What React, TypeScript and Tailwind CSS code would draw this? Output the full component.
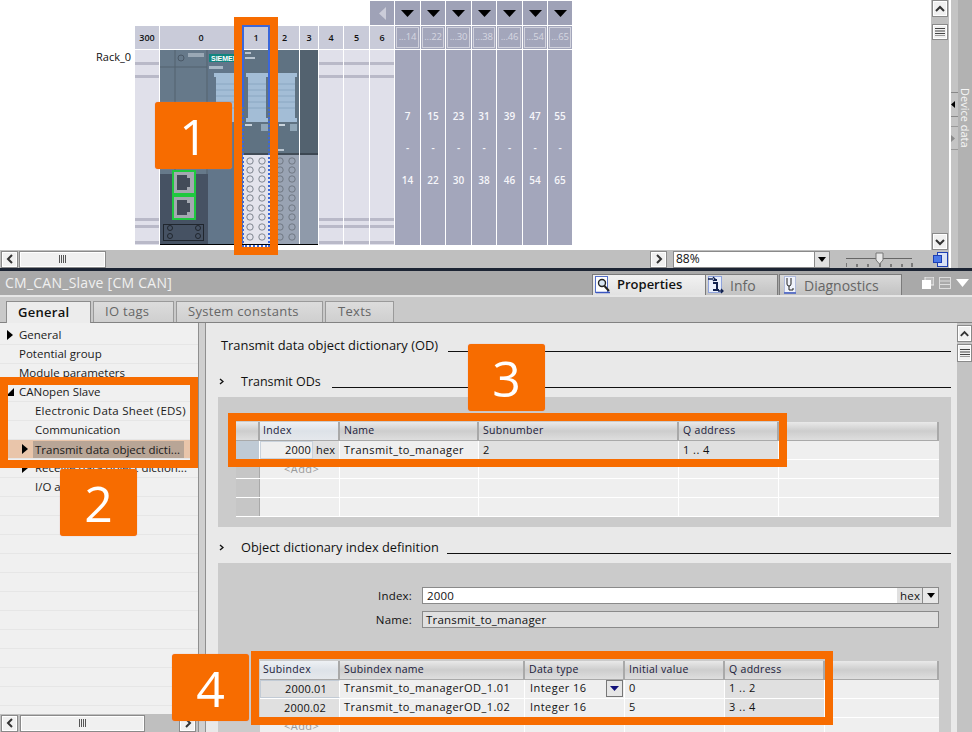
import React from "react";

const Tri = () => (
  <svg width="13" height="7" viewBox="0 0 13 7"><polygon points="0,0 13,0 6.5,7" fill="#000" /></svg>
);

const UpDown = ({ dir }: { dir: "up" | "down" | "left" | "right" }) => {
  const d = { up: "M3 9 L7 5 L11 9", down: "M3 5 L7 9 L11 5", left: "M9 3 L5 7 L9 11", right: "M5 3 L9 7 L5 11" }[dir];
  return (
    <svg width="14" height="14" viewBox="0 0 14 14"><path d={d} fill="none" stroke="#333" strokeWidth="2" /></svg>
  );
};

const SBtn = ({ className, children }: { className: string; children?: React.ReactNode }) => (
  <div className={"flex items-center justify-center bg-[#f0f0f0] border border-[#8a8a8a] shadow-[inset_0_0_0_1px_#fff] " + className}>{children}</div>
);

const Grip = () => (
  <svg width="10" height="8" viewBox="0 0 10 8"><path d="M0 .5H10M0 3H10M0 5.5H10M0 8H10" stroke="#444" strokeWidth="1" /></svg>
);
const GripV = () => (
  <svg width="8" height="8" viewBox="0 0 8 8"><path d="M.5 0V8M2.5 0V8M4.5 0V8M6.5 0V8" stroke="#555" strokeWidth="1" /></svg>
);

const Bars = () => (
  <>
    <div className="h-[12px]" />
    <div className="h-[3px] bg-[#b9b9c8]" />
    <div className="h-[10px]" />
    <div className="h-[3px] bg-[#b9b9c8]" />
    <div className="h-[140px]" />
    <div className="h-[3px] bg-[#b9b9c8]" />
    <div className="h-[4px]" />
    <div className="h-[3px] bg-[#b9b9c8]" />
    <div className="h-[13px]" />
    <div className="h-[3px] bg-[#b9b9c8]" />
  </>
);

const EmptySlot = ({ w }: { w: string }) => <div className={"h-[195px] bg-[#e0e0ea] " + w}><Bars /></div>;

const AddrCol = ({ w, a, b }: { w: string; a: string; b: string }) => (
  <div className={"h-[195px] bg-[#a3a6bb] flex flex-col items-center pt-[59px] gap-[18px] text-[10px] font-semibold leading-[14px] text-[#f6f6fa] " + w}>
    <div>{a}</div>
    <div>-</div>
    <div>{b}</div>
  </div>
);

const Head = ({ w, t }: { w: string; t: string }) => (
  <div className={"h-[23px] bg-[#c9cbd9] flex items-center justify-center text-[9px] font-semibold text-[#111] " + w}>{t}</div>
);

const AddrHead = ({ w, t }: { w: string; t: string }) => (
  <div className={"h-[23px] bg-[#a3a6bb] p-px " + w}>
    <div className="h-full border border-[#d0d1dc] flex items-center justify-center text-[9.5px] tracking-[-0.2px] font-medium text-[#d6d7e1] overflow-hidden whitespace-nowrap">{t}</div>
  </div>
);

const TopCell = ({ w }: { w: string }) => (
  <div className={"h-[24px] bg-[#9fa2b7] flex items-center justify-center " + w}><Tri /></div>
);

const circles = [161, 170, 179, 189, 198, 208, 217, 227, 237];

const Modules = () => (
  <svg width="158" height="195" viewBox="160 50 158 195" className="block">
    <rect x="160" y="50" width="48" height="195" fill="#66798a" />
    <path d="M175 50V174M207 50V245M160 67H207" stroke="#53626f" strokeWidth="1" />
    <circle cx="181" cy="58" r="3" fill="none" stroke="#4a5866" />
    <rect x="188" y="53" width="16" height="4" fill="#9aa8b5" />
    <rect x="160" y="174" width="48" height="71" fill="#465263" />
    <rect x="208" y="50" width="35" height="195" fill="#62768a" />
    <rect x="209" y="54" width="26" height="8" fill="#12857f" />
    <text x="211" y="61" fontSize="7" fontWeight="700" fill="#fff" fontFamily="Liberation Sans">SIEMENS</text>
    <rect x="209" y="66" width="14" height="3" fill="#a9b8c6" />
    <path d="M214 73H238V77H236V118H238V122H214V118H216V77H214Z" fill="#a3bdd6" />
    <path d="M216 84H236M216 90H236M216 96H236M216 102H236M216 108H236" stroke="#8aa7c2" />
    <rect x="243" y="50" width="27" height="104" fill="#5f7282" />
    <rect x="243" y="153" width="27" height="2" fill="#414c57" />
    <rect x="243" y="155" width="27" height="90" fill="#e3e3ec" />
    <rect x="245" y="52" width="6" height="2" fill="#b9c5d0" /><rect x="245" y="57" width="10" height="2" fill="#b9c5d0" />
    <path d="M246 73H268V77H266V118H268V122H246V118H248V77H246Z" fill="#a3bdd6" />
    <path d="M248 84H266M248 90H266M248 96H266M248 102H266M248 108H266" stroke="#8aa7c2" />
    <rect x="245" y="124" width="7" height="2" fill="#c9d3dc" /><rect x="261" y="124" width="7" height="7" fill="#90a6b7" />
    <rect x="270" y="50" width="29" height="104" fill="#5f7282" />
    <rect x="270" y="153" width="29" height="2" fill="#414c57" />
    <rect x="270" y="155" width="29" height="90" fill="#99a3b3" />
    <path d="M272 73H297V77H295V118H297V122H272V118H274V77H272Z" fill="#a3bdd6" />
    <path d="M274 84H295M274 90H295M274 96H295M274 102H295M274 108H295" stroke="#8aa7c2" />
    <rect x="290" y="124" width="7" height="7" fill="#90a6b7" />
    <rect x="279" y="124" width="6" height="2" fill="#c9d3dc" /><rect x="278" y="149" width="6" height="2" fill="#b9c5d0" />
    <rect x="300" y="50" width="18" height="103" fill="#53626f" />
    <rect x="300" y="153" width="18" height="2" fill="#3c4752" />
    <rect x="300" y="155" width="18" height="90" fill="#8f9aaa" />
    <rect x="299" y="50" width="1" height="195" fill="#fff" />
    {circles.map((y) => (
      <g key={y} fill="none" stroke="#666d77" strokeWidth="0.8">
        <circle cx="250" cy={y} r="3.2" /><circle cx="262" cy={y} r="3.2" />
        <circle cx="280" cy={y} r="3.2" /><circle cx="292" cy={y} r="3.2" />
      </g>
    ))}
    {[170, 195].map((y) => (
      <g key={y}>
        <rect x="173" y={y + 1} width="22" height="23" fill="#a4a8b0" stroke="#1fc83f" strokeWidth="2" />
        <path d={`M177 ${y + 5}H187V${y + 8}H190V${y + 17}H187V${y + 20}H177Z`} fill="#434b58" />
      </g>
    ))}
    <rect x="163.5" y="224.5" width="40" height="16" fill="none" stroke="#20262e" />
    {[[170, 228], [198, 228], [170, 236], [198, 236]].map(([x, y]) => (
      <circle key={x + "-" + y} cx={x} cy={y} r="2.5" fill="none" stroke="#20262e" />
    ))}
    <rect x="160" y="244" width="158" height="1" fill="#000" />
  </svg>
);

const TopArea = () => (
  <div className="flex h-[268px] bg-white">
    <div className="w-[931px] flex flex-col">
      <div className="h-[250px] pl-[135px] pt-px">
        <div className="flex gap-px pl-[235px]">
          <div className="h-[24px] w-[24px] bg-[#9fa2b7] flex items-center justify-center">
            <svg width="7" height="13" viewBox="0 0 7 13"><polygon points="7,0 7,13 0,6.5" fill="#cbccd9" /></svg>
          </div>
          <TopCell w="w-[25px]" /><TopCell w="w-[24px]" /><TopCell w="w-[25px]" /><TopCell w="w-[24px]" />
          <TopCell w="w-[25px]" /><TopCell w="w-[24px]" /><TopCell w="w-[24px]" />
        </div>
        <div className="flex gap-px mt-px">
          <Head w="w-[24px]" t="300" /><Head w="w-[82px]" t="0" /><Head w="w-[26px]" t="1" /><Head w="w-[29px]" t="2" />
          <Head w="w-[18px]" t="3" /><Head w="w-[24px]" t="4" /><Head w="w-[25px]" t="5" /><Head w="w-[24px]" t="6" />
          <AddrHead w="w-[25px]" t="...14" /><AddrHead w="w-[24px]" t="...22" /><AddrHead w="w-[25px]" t="...30" />
          <AddrHead w="w-[24px]" t="...38" /><AddrHead w="w-[25px]" t="...46" /><AddrHead w="w-[24px]" t="...54" /><AddrHead w="w-[24px]" t="...65" />
        </div>
        <div className="flex gap-px mt-px">
          <EmptySlot w="w-[24px]" />
          <Modules />
          <EmptySlot w="w-[24px]" /><EmptySlot w="w-[25px]" /><EmptySlot w="w-[24px]" />
          <AddrCol w="w-[25px]" a="7" b="14" /><AddrCol w="w-[24px]" a="15" b="22" /><AddrCol w="w-[25px]" a="23" b="30" />
          <AddrCol w="w-[24px]" a="31" b="38" /><AddrCol w="w-[25px]" a="39" b="46" /><AddrCol w="w-[24px]" a="47" b="54" /><AddrCol w="w-[24px]" a="55" b="65" />
        </div>
      </div>
      <div className="h-[18px] bg-[#bfbfbf] flex items-center">
        <SBtn className="w-[17px] h-[17px] ml-[1px]"><UpDown dir="left" /></SBtn>
        <SBtn className="w-[87px] h-[17px] ml-[1px]"><GripV /></SBtn>
        <SBtn className="w-[17px] h-[17px] ml-[544px]"><UpDown dir="right" /></SBtn>
        <div className="ml-[6px] w-[157px] h-[17px] bg-white border border-[#8a8a8a] flex items-center justify-between text-[12px] leading-none text-[#111]">
          <span className="pl-[2px]">88%</span>
          <div className="w-[15px] h-full bg-[#e0e0e0] border-l border-[#8a8a8a] flex items-center justify-center">
            <svg width="8" height="5" viewBox="0 0 8 5"><polygon points="0,0 8,0 4,5" fill="#000" /></svg>
          </div>
        </div>
        <svg width="68" height="16" viewBox="0 0 68 16" className="ml-[16px]">
          <path d="M0 7.5H66" stroke="#666" />
          <path d="M0 12V16M11 13V16M22 13V16M34 12V16M45 13V16M56 13V16M66 12V16" stroke="#333" />
          <path d="M30 2H37V9L33.5 13L30 9Z" fill="#e8e8e8" stroke="#777" />
        </svg>
      </div>
    </div>
    <div className="w-[18px] flex flex-col bg-[#bfbfbf]">
      <div className="h-[250px] flex flex-col justify-between">
        <div className="flex flex-col gap-[7px]">
          <SBtn className="h-[17px] mx-px"><UpDown dir="up" /></SBtn>
          <SBtn className="h-[16px] mx-px"><Grip /></SBtn>
        </div>
        <SBtn className="h-[17px] mx-px"><UpDown dir="down" /></SBtn>
      </div>
      <div className="h-[18px] flex items-center justify-center bg-[#bfbfbf]">
        <svg width="15" height="15" viewBox="0 0 15 15">
          <rect x="4.5" y="0.5" width="10" height="14" fill="#d9e2f5" stroke="#1d3fb3" />
          <rect x="0.5" y="3.5" width="8" height="7" fill="#4a78e8" stroke="#1d3fb3" />
        </svg>
      </div>
    </div>
    <div className="w-[23px] flex bg-[#ececec]">
      <div className="w-[2px] bg-white" />
      <div className="w-[7px] bg-[#c4c4c4] flex flex-col pt-[92px]">
        <div className="h-[25px] border-y border-[#888] flex items-center">
          <svg width="4" height="7" viewBox="0 0 4 7"><polygon points="4,0 4,7 0,3.5" fill="#000" /></svg>
        </div>
        <div className="h-[24px] mt-[9px] border-y border-[#999] flex items-center">
          <svg width="4" height="7" viewBox="0 0 4 7"><polygon points="0,0 0,7 4,3.5" fill="#8a8a8a" /></svg>
        </div>
      </div>
      <div className="w-[14px] bg-[#b2b2b2] pt-[88px] flex justify-center">
        <div className="[writing-mode:vertical-rl] text-[11px] leading-[14px] text-[#f6f6f6]">Device data</div>
      </div>
    </div>
  </div>
);

const PropsIcon = () => (
  <svg width="16" height="18" viewBox="0 0 16 18">
    <rect x="0.5" y="0.5" width="12" height="16" fill="#fff" stroke="#5570c8" />
    <circle cx="7" cy="7" r="3.5" fill="#d8e6f4" stroke="#222" strokeWidth="1.4" />
    <path d="M9.5 10L14 15" stroke="#222" strokeWidth="2" />
    <path d="M1 16.5H15" stroke="#3a56c0" strokeWidth="1.5" />
  </svg>
);
const InfoIcon = () => (
  <svg width="16" height="18" viewBox="0 0 16 18">
    <rect x="0.5" y="0.5" width="13" height="16" fill="#e8eefb" stroke="#8fa3dc" />
    <path d="M0 3H5M5 1L7 3L5 5" stroke="#10204f" strokeWidth="1.3" fill="none" />
    <rect x="6" y="3" width="3" height="2" fill="#10204f" />
    <path d="M5 7H9V14H11M5 14H9" stroke="#10204f" strokeWidth="2" fill="none" />
    <path d="M10 15H15M13 13L15 15L13 17" stroke="#10204f" strokeWidth="1.3" fill="none" />
  </svg>
);
const DiagIcon = () => (
  <svg width="13" height="18" viewBox="0 0 13 18">
    <rect x="0.5" y="0.5" width="11" height="16" fill="#f0f3fb" stroke="#b0bbdc" />
    <path d="M3 2V8Q3 10 5 10Q7 10 7 8V2M5 10V14H9V12" stroke="#222" fill="none" />
    <path d="M0 17H12" stroke="#3a56c0" strokeWidth="1.4" />
  </svg>
);

const PropHeader = () => (
  <>
    <div className="h-[3px] bg-[#1c2433]" />
    <div className="h-[24px] bg-[#a9a9a9] flex items-end">
      <div className="w-[592px] self-center pl-[5px] text-[14px] font-medium leading-[20px] text-[#f0f0f0] tracking-[0.25px]">CM_CAN_Slave [CM CAN]</div>
      <div className="w-[113px] h-[21px] bg-gradient-to-b from-[#f2f2f2] to-[#e2e2e2] border-l border-t border-[#7b7b7b] flex items-center gap-[6px] pl-[2px] text-[13px] font-semibold text-[#111]">
        <PropsIcon /><span>Properties</span>
      </div>
      <div className="w-[73px] h-[21px] bg-gradient-to-b from-[#d9d9d9] to-[#c3c3c3] border-x border-t border-[#7b7b7b] flex items-center gap-[6px] pl-[2px] text-[14px] font-medium text-[#666]">
        <InfoIcon /><span>Info</span>
      </div>
      <div className="ml-[1px] w-[123px] h-[21px] bg-gradient-to-b from-[#d9d9d9] to-[#c3c3c3] border-x border-t border-[#7b7b7b] flex items-center gap-[7px] pl-[4px] text-[14px] font-medium text-[#666]">
        <DiagIcon /><span>Diagnostics</span>
      </div>
      <div className="flex items-center gap-[5px] ml-[20px] self-center">
        <svg width="12" height="12" viewBox="0 0 12 12"><rect x="3" y="0" width="9" height="8" fill="#bbb" stroke="#eee" /><rect x="0" y="3" width="9" height="9" fill="#fff" /></svg>
        <svg width="12" height="12" viewBox="0 0 12 12"><rect x="0.5" y="0.5" width="11" height="11" fill="none" stroke="#ddd" /><path d="M0 4H12M0 7.5H12" stroke="#ddd" /></svg>
        <svg width="13" height="8" viewBox="0 0 13 8"><polygon points="0,0 13,0 6.5,8" fill="#fff" /></svg>
      </div>
    </div>
    <div className="h-[2px] bg-[#e6e6e6]" />
    <div className="h-[26px] bg-[#c9c9c9] border-b border-[#828282] flex items-end pl-[6px] gap-[2px] text-[13px] tracking-[0.3px]">
      <div className="relative top-px w-[85px] h-[22px] bg-[#ececec] border-x border-t border-[#8c8c8c] flex items-center pl-[11px] font-semibold text-[#111]">General</div>
      <div className="w-[81px] h-[21px] bg-gradient-to-b from-[#dcdcdc] to-[#cfcfcf] border-x border-t border-[#9a9a9a] flex items-center pl-[11px] font-medium text-[#666]">IO tags</div>
      <div className="w-[147px] h-[21px] bg-gradient-to-b from-[#dcdcdc] to-[#cfcfcf] border-x border-t border-[#9a9a9a] flex items-center pl-[11px] font-medium text-[#666]">System constants</div>
      <div className="w-[69px] h-[21px] bg-gradient-to-b from-[#dcdcdc] to-[#cfcfcf] border-x border-t border-[#9a9a9a] flex items-center pl-[12px] font-medium text-[#666]">Texts</div>
    </div>
  </>
);

const NavRow = ({ t, arrow, indent, sel, wide }: { t?: string; arrow?: "right" | "down"; indent?: boolean; sel?: boolean; wide?: boolean }) => (
  <div className={"h-[19px] border-b border-[#e6e6e6] flex items-center text-[11.5px] text-[#1a1a1a] whitespace-nowrap " + (sel ? "bg-[#e9c5aa] " : "") + (wide ? "tracking-[0.22px]" : "")}>
    <div className={"flex items-center justify-center w-[10px] shrink-0 " + (indent ? "ml-[20px] mr-[5px]" : "ml-[5px] mr-[4px]")}>
      {arrow === "right" && <svg width="6" height="10" viewBox="0 0 6 10"><polygon points="0,0 6,5 0,10" fill="#000" /></svg>}
      {arrow === "down" && <svg width="8" height="8" viewBox="0 0 8 8"><polygon points="8,0 8,8 0,8" fill="#000" /></svg>}
    </div>
    {t && <div className={sel ? "bg-[#b8a596] h-[17px] w-[151px] leading-[17px] -ml-[2px] pl-[2px]" : ""}>{t}</div>}
  </div>
);

const NavPanel = () => (
  <div className="w-[198px] bg-[#f0f0f0] flex flex-col justify-between">
    <div className="pt-[3px]">
      <NavRow t="General" arrow="right" />
      <NavRow t="Potential group" />
      <NavRow t="Module parameters" />
      <NavRow t="CANopen Slave" arrow="down" />
      <NavRow t="Electronic Data Sheet (EDS)" indent wide />
      <NavRow t="Communication" indent />
      <NavRow t="Transmit data object dicti..." indent arrow="right" sel />
      <NavRow t="Receive data object diction..." indent arrow="right" />
      <NavRow t="I/O addresses" indent />
      {Array.from({ length: 11 }).map((_, i) => <NavRow key={i} />)}
    </div>
    <div className="h-[18px] bg-[#bfbfbf] flex items-center">
      <SBtn className="w-[17px] h-[17px] ml-[1px]"><UpDown dir="left" /></SBtn>
      <SBtn className="w-[125px] h-[17px] ml-[2px]"><GripV /></SBtn>
      <SBtn className="w-[17px] h-[17px] ml-[34px]"><UpDown dir="right" /></SBtn>
    </div>
  </div>
);

const SectionTitle = ({ t, chevron, line, size }: { t: string; chevron?: boolean; line: string; size: string }) => (
  <div className={"flex h-[20px] items-center text-[#111] whitespace-nowrap " + size}>
    {chevron ? (
      <>
        <svg width="5" height="7" viewBox="0 0 5 7" className="ml-[1px] mr-[17px]"><path d="M1 1L4 3.5L1 6" fill="none" stroke="#111" strokeWidth="1.4" /></svg>
        <span className="pt-[2px]">{t}</span>
      </>
    ) : (
      <span className="ml-[3px] pt-[2px]">{t}</span>
    )}
    <div className={"ml-auto h-px bg-[#111] mt-[12px] " + line} />
  </div>
);

const hCell = "h-[18px] flex items-center pl-[4px] border-r-2 border-[#a9a9a9] bg-gradient-to-b from-[#e9e9e9] via-[#cdcdcd] to-[#dedede] text-[10.5px] text-[#1a1a3a] whitespace-nowrap tracking-[0.3px]";
const hFirst = "h-[18px] flex items-center pl-[3px] border-r-2 border-[#a9a9a9] bg-gradient-to-b from-[#eef1f5] via-[#dde2e8] to-[#e5e8ec] text-[10.5px] text-[#1a1a3a] whitespace-nowrap tracking-[0.3px]";
const lt = "h-[18px] flex items-center pl-[4px] border-r border-white bg-[#efefef] text-[11px] text-[#111] whitespace-nowrap tracking-[0.45px]";
const dk = "h-[18px] flex items-center pl-[4px] border-r border-white bg-[#e0e0e0] text-[11px] text-[#111] whitespace-nowrap tracking-[0.45px]";
const rowLine = "flex border-b border-white";

const Table1 = () => (
  <div className="mt-[25px] ml-[18px] mr-[12px]">
    <div className="flex border-b border-[#a9a9a9]">
      <div className={hCell + " w-[24px]"} />
      <div className={hFirst + " w-[80px]"}>Index</div>
      <div className={hCell + " w-[139px]"}>Name</div>
      <div className={hCell + " w-[200px]"}>Subnumber</div>
      <div className={hCell + " w-[100px]"}>Q address</div>
      <div className={hCell + " flex-1 border-r-0"} />
    </div>
    <div className={rowLine}>
      <div className="w-[24px] h-[18px] bg-[#bfcad5] border-r border-white" />
      <div className="w-[80px] h-[18px] flex border-r border-white text-[11px] text-[#111] tracking-[0.2px]">
        <div className="w-[53px] bg-[#efefef] border border-[#c9d2dc] pr-[1px] text-right leading-[16px]">2000</div>
        <div className="flex-1 bg-[#e0e0e0] pl-[3px] leading-[18px]">hex</div>
      </div>
      <div className={lt + " w-[139px]"}>Transmit_to_manager</div>
      <div className={dk + " w-[200px]"}>2</div>
      <div className={dk + " w-[100px]"}>1 .. 4</div>
      <div className={lt + " flex-1 border-r-0"} />
    </div>
    {["<Add>", "", ""].map((t, i) => (
      <div key={i} className={rowLine}>
        <div className="w-[24px] h-[18px] bg-[#c6c6c6] border-r border-[#a9a9a9]" />
        <div className={lt + " w-[80px] text-[#9a9a9a]! pl-[24px]"}>{t}</div>
        <div className={lt + " w-[139px]"} />
        <div className={lt + " w-[200px]"} />
        <div className={lt + " w-[100px]"} />
        <div className={lt + " flex-1 border-r-0"} />
      </div>
    ))}
  </div>
);

const Table2 = () => (
  <div className="mt-[31px] ml-[42px] mr-[12px]">
    <div className="flex border-b border-[#a9a9a9]">
      <div className={hFirst + " w-[80px]"}>Subindex</div>
      <div className={hCell + " w-[185px]"}>Subindex name</div>
      <div className={hCell + " w-[100px]"}>Data type</div>
      <div className={hCell + " w-[100px]"}>Initial value</div>
      <div className={hCell + " w-[100px]"}>Q address</div>
      <div className={hCell + " flex-1 border-r-0"} />
    </div>
    <div className={rowLine}>
      <div className="w-[80px] h-[18px] bg-[#e0e0e0] border border-[#c2cbd5] border-r-white text-right pr-[12px] text-[11px] leading-[16px] text-[#111] tracking-[0.2px]">2000.01</div>
      <div className={lt + " w-[185px]"}>Transmit_to_managerOD_1.01</div>
      <div className={lt + " w-[100px] justify-between pr-px pl-[5px]"}>
        <span>Integer 16</span>
        <div className="w-[17px] h-[17px] bg-[#e6e6e6] border border-[#777] flex items-center justify-center">
          <svg width="9" height="5" viewBox="0 0 9 5"><polygon points="0,0 9,0 4.5,5" fill="#10107a" /></svg>
        </div>
      </div>
      <div className={lt + " w-[100px]"}>0</div>
      <div className={dk + " w-[100px]"}>1 .. 2</div>
      <div className={lt + " flex-1 border-r-0"} />
    </div>
    <div className={rowLine}>
      <div className="w-[80px] h-[18px] bg-[#e0e0e0] border-r border-white text-right pr-[13px] text-[11px] leading-[18px] text-[#111] tracking-[0.2px]">2000.02</div>
      <div className={lt + " w-[185px]"}>Transmit_to_managerOD_1.02</div>
      <div className={lt + " w-[100px] pl-[5px]"}>Integer 16</div>
      <div className={lt + " w-[100px]"}>5</div>
      <div className={dk + " w-[100px]"}>3 .. 4</div>
      <div className={lt + " flex-1 border-r-0"} />
    </div>
    <div className={rowLine}>
      <div className={lt + " w-[80px] text-[#9a9a9a]! pl-[24px]"}>{"<Add>"}</div>
      <div className={lt + " w-[185px]"} />
      <div className={lt + " w-[100px]"} />
      <div className={lt + " w-[100px]"} />
      <div className={lt + " w-[100px]"} />
      <div className={lt + " flex-1 border-r-0"} />
    </div>
  </div>
);

const Content = () => (
  <div className="flex-1 min-w-0 bg-[#e9e9e9] pl-[12px] pr-[6px] pt-[12px] overflow-hidden">
    <SectionTitle t="Transmit data object dictionary (OD)" line="w-[503px]" size="text-[12.9px]" />
    <div className="h-[16px]" />
    <SectionTitle t="Transmit ODs" chevron line="w-[619px]" size="text-[12.5px]" />
    <div className="mt-[6px] h-[130px] bg-[#cbcbcb] overflow-hidden flex flex-col">
      <Table1 />
    </div>
    <div className="h-[10px]" />
    <SectionTitle t="Object dictionary index definition" chevron line="w-[504px]" size="text-[12.8px]" />
    <div className="mt-[6px] h-[170px] bg-[#cbcbcb] flex flex-col overflow-hidden">
      <div className="pt-[24px] pb-[1px] pl-[150px] pr-[12px] flex flex-col gap-[7px] text-[11.5px] text-[#111]">
        <div className="flex items-center">
          <div className="w-[44px] text-right tracking-[0.2px]">Index:</div>
          <div className="ml-[10px] flex-1 h-[17px] bg-white border border-[#8a8a8a] flex items-center pl-[4px] justify-between tracking-[0.2px]">
            <span>2000</span>
            <div className="flex h-full">
              <div className="w-[25px] bg-[#e0e0e0] pl-[3px] leading-[15px]">hex</div>
              <div className="w-[16px] bg-[#e8e8e8] border-l border-[#8a8a8a] flex items-center justify-center">
                <svg width="8" height="5" viewBox="0 0 8 5"><polygon points="0,0 8,0 4,5" fill="#000" /></svg>
              </div>
            </div>
          </div>
        </div>
        <div className="flex items-center">
          <div className="w-[44px] text-right tracking-[0.2px]">Name:</div>
          <div className="ml-[10px] flex-1 h-[17px] bg-[#e0e0e0] border border-[#8a8a8a] flex items-center pl-[3px] tracking-[0.2px]">Transmit_to_manager</div>
        </div>
      </div>
      <Table2 />
    </div>
  </div>
);

const Frame = ({ className }: { className: string }) => (
  <div className={"absolute border-[8px] border-[#f76c00] pointer-events-none " + className} />
);

const Badge = ({ t, className }: { t: string; className: string }) => (
  <div className={"absolute w-[77px] h-[67px] bg-[#f76c00] rounded-[3px] flex items-center justify-center text-white text-[50px] leading-none font-normal shadow-[0_0_1px_#d88] " + className}>{t}</div>
);

export default function App() {
  return (
    <div className="relative w-[972px] h-[732px] overflow-hidden font-['Open_Sans',sans-serif]">
      <TopArea />
      <PropHeader />
      <div className="flex h-[409px]">
        <NavPanel />
        <div className="w-[8px] bg-[#cfcfcf] border-x border-[#8f8f8f]" />
        <Content />
        <div className="w-[15px] bg-[#c3c3c3] flex flex-col gap-[2px] pt-[2px]">
          <SBtn className="h-[17px]"><UpDown dir="up" /></SBtn>
          <SBtn className="h-[18px]"><Grip /></SBtn>
        </div>
      </div>

      <Frame className="left-[234px] top-[17px] w-[44px] h-[238px]" />
      <div className="absolute left-[242px] top-[25px] w-[28px] h-[222px] flex flex-col">
        <div className="h-[80px] border-t-2 border-x-2 border-[#3b67d9]" />
        <div className="flex-1 border-b-2 border-x-2 border-dotted border-[#3b67d9]" />
      </div>
      <Frame className="left-0 top-[377px] w-[198px] h-[91px]" />
      <Frame className="left-[228px] top-[413px] w-[559px] h-[54px]" />
      <Frame className="left-[251px] top-[651px] w-[582px] h-[74px]" />
      <Badge t="1" className="left-[155px] top-[102px]" />
      <Badge t="2" className="left-[60px] top-[469px]" />
      <Badge t="3" className="left-[468px] top-[344px]" />
      <Badge t="4" className="left-[172px] top-[654px]" />

      <div className="absolute left-[96px] top-[49px] text-[11px] leading-[16px] text-[#111]">Rack_0</div>
    </div>
  );
}
